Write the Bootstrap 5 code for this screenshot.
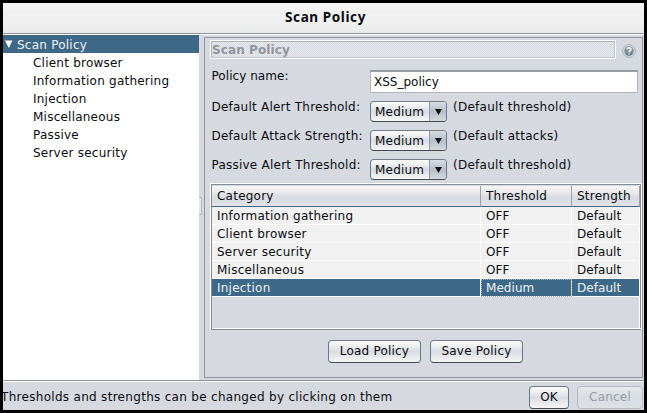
<!DOCTYPE html>
<html lang="en">
<head>
<meta charset="utf-8">
<meta name="viewport" content="width=device-width, initial-scale=1">
<title>Scan Policy</title>
<link href="https://cdn.jsdelivr.net/npm/bootstrap@5.3.0/dist/css/bootstrap.min.css" rel="stylesheet">
<style>
:root{--face:#d6d9e0;--edge:#8e939e;--sel:#3d6888}
body{font:12px/18px "DejaVu Sans",sans-serif;letter-spacing:.23px;color:#0a0c10;background:#000;width:647px;height:413px;white-space:nowrap}
.window{width:647px;height:413px;border:3px solid #000;background:var(--face)}
.titlebar{height:32px;padding:0 0 4px 4px;font-family:"Noto Sans",sans-serif;font-size:13.5px;letter-spacing:.6px;border-bottom:1px solid #fff;box-shadow:inset 0 -1px var(--edge);
 background:linear-gradient(#f6f6f6,#f0f0f0 30%,#f0f0f0 65%,#e8e9eb)}
.workarea{height:345px}
.tree{width:196px;background:#fff}
.tree-root{background:var(--sel);color:#eef2f6;padding-left:2px;height:18px}
.tree-root span{padding-top:2px}
.tree-root svg{margin-right:4px}
.tree-leaf{padding:1px 0 0 30px;height:18px}
.splitter{width:5px;padding-top:162px}
.grip{width:3px;height:18px;border:1px solid #b3b6be;border-left:0;background:#e4e6ea}
.pane{width:439px;height:341px;margin-top:2px;border:1px solid var(--edge);padding:2px 0 0 5px}
.pane-head{height:19px}
.pane-title{width:406px;height:19px;border:1px solid #fff;padding-left:1px;line-height:18px;letter-spacing:.1px;color:#8f949e;
 box-shadow:inset 1px 1px #aeb2bb,inset -1px -1px #c0c3cb;
 background:conic-gradient(#e6e8ed 25%,#dadce3 0 50%,#e6e8ed 0 75%,#dadce3 0) 0 0/2px 2px}
.help{margin:4px 0 0 6px}
.form-line{height:29px;padding-left:1px}
.form-line.first{height:31px}
.form-line.last{height:24px}
.fields{padding-top:11px}
.cap{width:159px;height:18px;margin-top:-3px;padding-left:.5px}
.first .cap{letter-spacing:.05px}
.entry{width:268px;height:23px;padding:0 3px 1px;border:1px solid #b0b5bf;border-top:2px solid #979ba4;border-radius:0;font-size:12px;line-height:17px;letter-spacing:0;color:#0a0c10;box-shadow:none}
.jbtn,.combo{border:1px solid #747b87;border-bottom-color:#424951;border-left-color:#607b93;border-right-color:#607b93;border-radius:4px;font-size:12px;line-height:18px;padding:0;color:#0a0c10;letter-spacing:.2px;
 background:linear-gradient(#fafafb,#eff0f2 22%,#d9dce3 50%,#e5e7ea 72%,#f6f6f7)}
.combo{width:77px;height:21px;overflow:hidden;padding-left:4px;line-height:20px}
.combo .drop{width:17px;height:19px;border-left:1px solid #939ba7;background:linear-gradient(#d9dce1,#b8bdc8 50%,#d5d8df)}
.hint{padding-left:6px;margin-top:-3px;letter-spacing:.26px}
.grid-box{width:432px;height:147px;border:1px solid #fff;border-bottom:0;box-shadow:inset 1px 1px #858b96,inset 0 -1px #858b96,inset 0 -2px #fff,inset -1px 0 #858b96,inset -2px 0 #fff;padding:2px 0 0 1px}
.jgrid{width:428px;table-layout:fixed;border-collapse:separate;border-spacing:0;margin:0}
.jgrid th,.jgrid td{padding:0 5px;font-weight:400;line-height:17px;overflow:hidden}
.jgrid th{height:21px;line-height:19px;border-right:1px solid #9a9fa8;border-bottom:1px solid #416684;background:linear-gradient(#f6f6f7,#e8e9ec 35%,#d8dbe2 55%,#e0e3e9)}
.jgrid td{height:18px;padding-top:1px;line-height:16px;border-right:1px solid #fff;border-bottom:1px solid #fff;background:#f1f1f2}
.jgrid td+td{letter-spacing:.05px}
.jgrid tr.picked td{background:var(--sel);color:#eef2f6}
.jgrid td.lead-cell{outline:1px dotted #aeb8c2;outline-offset:-1px}
.actions{padding:10px 0 0 118px;gap:9px}
.actions .jbtn{width:93px;height:23px;line-height:21px}
.status{height:30px;border-top:1px solid var(--edge);box-shadow:inset 0 1px #fff}
.status-text{margin-left:-2px;line-height:33px;letter-spacing:.3px}
.status .jbtn{height:23px;line-height:21px;margin-top:5px}
.ok{width:40px}
.status .cancel{width:66px;margin-left:8px;margin-right:1px}
.jbtn.cancel{color:#989da6;border-color:#b5b9c2;background:linear-gradient(#e7e9ed,#d9dce3 45%,#dde0e5)}
</style>
</head>
<body>
<main class="window overflow-hidden d-flex flex-column">
  <header class="titlebar d-flex align-items-center justify-content-center fw-bold">Scan Policy</header>
  <div class="workarea d-flex">
    <nav class="tree">
      <div class="tree-root d-flex align-items-center"><svg width="8" height="8" viewBox="0 0 8 8"><path d="M0 .5h7.5L3.8 8z" fill="#fff"/></svg><span>Scan Policy</span></div>
      <div class="tree-leaf">Client browser</div>
      <div class="tree-leaf">Information gathering</div>
      <div class="tree-leaf">Injection</div>
      <div class="tree-leaf">Miscellaneous</div>
      <div class="tree-leaf">Passive</div>
      <div class="tree-leaf">Server security</div>
    </nav>
    <div class="splitter"><div class="grip"></div></div>
    <section class="pane">
      <div class="pane-head d-flex">
        <div class="pane-title fw-bold">Scan Policy</div>
        <svg class="help" width="14" height="14" viewBox="0 0 14 14"><circle cx="7" cy="7" r="6.3" fill="#dfe3e8" stroke="#a3aab4"/><circle cx="7" cy="7" r="4.8" fill="#83909e"/><path d="M3 9.5a4.8 4.8 0 0 0 8 0" fill="#52738c"/><path d="M5.2 5.5C5.2 3.3 9 3.3 9 5.3 9 6.7 7.1 6.6 7.1 8.2M7.1 9.4v1.4" fill="none" stroke="#fff" stroke-width="1.5"/></svg>
      </div>
      <div class="fields">
        <div class="form-line first d-flex"><label class="cap" for="policy">Policy name:</label><input id="policy" class="entry form-control" value="XSS_policy"></div>
        <div class="form-line d-flex"><span class="cap">Default Alert Threshold:</span><div class="combo d-flex justify-content-between">Medium<span class="drop d-flex align-items-center justify-content-center"><svg width="7" height="6" viewBox="0 0 7 6"><path d="M0 0h7L3.5 6z" fill="#111"/></svg></span></div><span class="hint">(Default threshold)</span></div>
        <div class="form-line d-flex"><span class="cap">Default Attack Strength:</span><div class="combo d-flex justify-content-between">Medium<span class="drop d-flex align-items-center justify-content-center"><svg width="7" height="6" viewBox="0 0 7 6"><path d="M0 0h7L3.5 6z" fill="#111"/></svg></span></div><span class="hint">(Default attacks)</span></div>
        <div class="form-line last d-flex"><span class="cap">Passive Alert Threshold:</span><div class="combo d-flex justify-content-between">Medium<span class="drop d-flex align-items-center justify-content-center"><svg width="7" height="6" viewBox="0 0 7 6"><path d="M0 0h7L3.5 6z" fill="#111"/></svg></span></div><span class="hint">(Default threshold)</span></div>
      </div>
      <div class="grid-box">
        <table class="jgrid">
          <colgroup><col width="269"><col width="91"><col width="68"></colgroup>
          <thead><tr><th>Category</th><th>Threshold</th><th>Strength</th></tr></thead>
          <tbody>
            <tr><td>Information gathering</td><td>OFF</td><td>Default</td></tr>
            <tr><td>Client browser</td><td>OFF</td><td>Default</td></tr>
            <tr><td>Server security</td><td>OFF</td><td>Default</td></tr>
            <tr><td>Miscellaneous</td><td>OFF</td><td>Default</td></tr>
            <tr class="picked"><td>Injection</td><td class="lead-cell">Medium</td><td>Default</td></tr>
          </tbody>
        </table>
      </div>
      <div class="actions d-flex"><button class="btn jbtn">Load Policy</button><button class="btn jbtn">Save Policy</button></div>
    </section>
  </div>
  <footer class="status d-flex">
    <span class="status-text me-auto">Thresholds and strengths can be changed by clicking on them</span>
    <button class="btn jbtn ok">OK</button><button class="btn jbtn cancel">Cancel</button>
  </footer>
</main>
<script src="https://cdn.jsdelivr.net/npm/bootstrap@5.3.0/dist/js/bootstrap.bundle.min.js"></script>
</body>
</html>
